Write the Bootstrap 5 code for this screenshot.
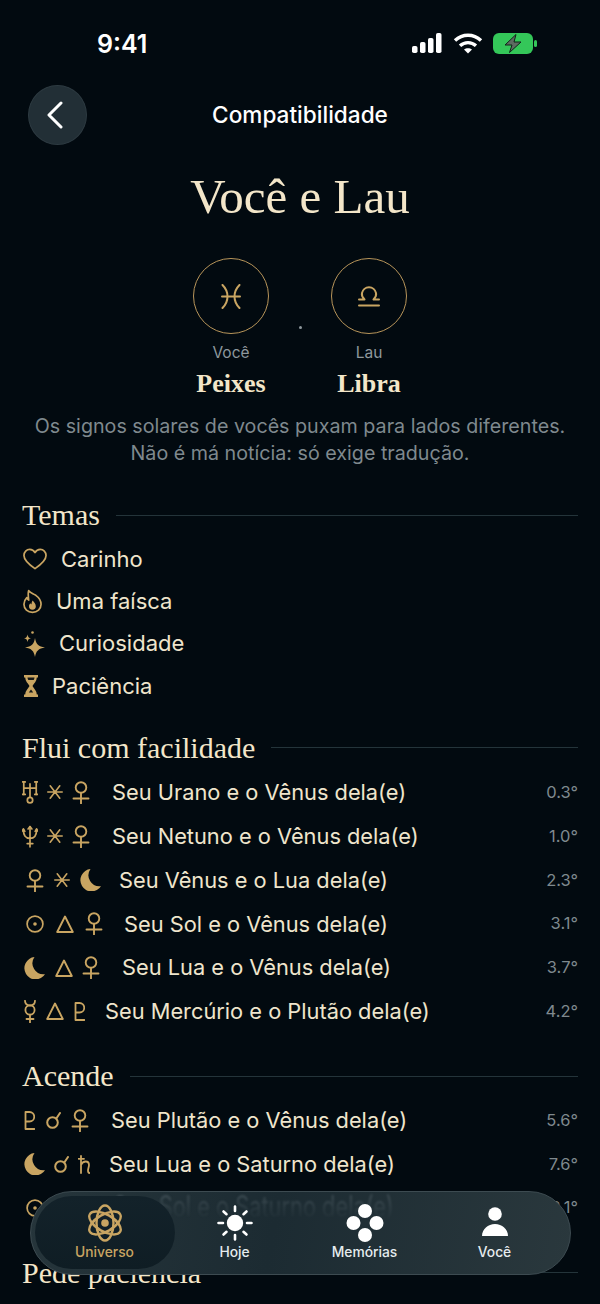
<!DOCTYPE html>
<html lang="pt-BR">
<head>
<meta charset="UTF-8">
<meta name="viewport" content="width=device-width, initial-scale=1.0">
<title>Compatibilidade</title>
<link href="https://cdn.jsdelivr.net/npm/bootstrap@5.3.0/dist/css/bootstrap.min.css" rel="stylesheet">
<style>
html, body { height: 1304px; overflow: hidden; }
body { background: #020a10; color: #efe5cc; font-family: Inter, "Liberation Sans", sans-serif; }
.screen { position: relative; height: 1304px; overflow: hidden; }
.status-row { height: 60px; padding: 26px 62px 0 97px; }
.clock { font-size: 25px; font-weight: 600; line-height: 36px; color: #fff; }
.st-icons { gap: 10px; }
.st-wifi { margin-left: 1px; }
.top-row { height: 60px; margin-top: 25px; padding: 0 28px; position: relative; }
.back-btn { width: 59px; height: 60px; border-radius: 50%; background: #222f36; border: 1px solid #2d3a41; padding-right: 6px; }
.top-title { position: absolute; left: 0; right: 0; top: 0; line-height: 60px; text-align: center; font-size: 22.6px; font-weight: 500; color: #fff; }
.serif { font-family: "Liberation Serif", serif; }
.big-title { font-size: 49px; line-height: 60px; margin: 22px 0 0; text-align: center; color: #f3e6c9; font-weight: 400; }
.signs { margin-top: 31px; gap: 62px; position: relative; }
.sign-col { width: 76px; }
.sign-ring { width: 76px; height: 76px; border-radius: 50%; border: 1.7px solid #b8955a; }
.sign-who { font-size: 15.5px; line-height: 20px; color: #8e989d; margin-top: 9px; }
.sign-name { font-size: 26px; font-weight: 700; line-height: 30px; margin-top: 6px; color: #f3e6c9; white-space: nowrap; }
.sign-dot { position: absolute; left: 298.5px; top: 68px; width: 3px; height: 3px; border-radius: 50%; background: #8e989d; }
.sign-note { margin: 14px 0 0; text-align: center; font-size: 19.7px; line-height: 27px; color: #7f898e; }
.sec-head { padding: 0 22px; gap: 16px; line-height: 36px; font-size: 30px; color: #f3e6c9; }
.sec-line { flex: 1; height: 1px; background: #24343a; }
.sec-temas { margin-top: 30px; }
.sec-flui { margin-top: 22px; }
.sec-more { margin-top: 25px; }
.theme-list { margin-top: 5px; }
.theme-row { height: 42.4px; padding-left: 23px; font-size: 22px; gap: 14px; }
.hour-icon { margin-left: 1px; }
.aspect-list { margin-top: 5px; }
.aspect-tight { margin-top: 4px; }
.aspect { height: 43.8px; padding-right: 22px; font-size: 21.8px; }
.glyph-set { display: flex; justify-content: space-between; align-items: center; flex: none; color: #c9a562; }
.gs-a { margin-left: 22px; width: 68px; margin-right: 22px; }
.gs-b { margin-left: 26px; width: 75px; margin-right: 18px; }
.gs-c { margin-left: 26px; width: 77px; margin-right: 21px; }
.gs-d { margin-left: 23px; width: 77px; margin-right: 22px; }
.gs-e { margin-left: 24px; width: 61px; margin-right: 20px; }
.gs-f { margin-left: 24px; width: 65px; margin-right: 22px; }
.gs-g { margin-left: 23px; width: 67px; margin-right: 19px; }
.orb { margin-left: auto; font-size: 16.5px; color: #7f898e; }
.gold { color: #c9a562; }
.tab-bar { position: absolute; left: 30px; top: 1191px; width: 541px; height: 84px; border-radius: 42px; border: 1.5px solid #3d4b51; background: linear-gradient(100deg, #26353b 0%, #1c2b32 45%, #2a383d 100%); overflow: hidden; padding-left: 8.5px; }
.tab-ghost { position: absolute; left: 82px; top: -6px; font-size: 21.8px; line-height: 30px; color: #5f6d74; transform: scaleY(1.35); transform-origin: left top; opacity: .42; filter: blur(.8px); white-space: nowrap; -webkit-mask-image: linear-gradient(180deg, #000 30%, transparent 85%); mask-image: linear-gradient(180deg, #000 30%, transparent 85%); }
.tab-item { position: relative; width: 130px; height: 81px; font-size: 13.8px; font-weight: 500; color: #e6ecee; padding-top: 12px; }
.tab-item span { position: absolute; left: 0; right: 0; top: 50px; line-height: 20px; text-align: center; }
.tab-item svg { position: relative; }
.tab-on { color: #c9a562; }
.tab-on::before { content: ""; position: absolute; left: -5px; right: -5px; top: 3.5px; bottom: 4px; border-radius: 37px; background: linear-gradient(180deg, #13222a 0%, #0f1d24 100%); }
.tab-on span { z-index: 1; }
</style>
</head>
<body>
<svg width="0" height="0" class="position-absolute">
  <defs>
    <symbol id="s-venus" viewBox="0 0 18 23"><g fill="none" stroke="currentColor" stroke-width="1.9" stroke-linecap="round"><circle cx="9" cy="6.500" r="5.300"/><path d="M9 12v10.500M1.500 17.500h15"/></g></symbol>
    <symbol id="s-sextile" viewBox="0 0 16 16"><g fill="none" stroke="currentColor" stroke-width="1.600" stroke-linecap="round"><path d="M.8 8h14.400M3.200 1.800l9.600 12.400M12.800 1.800 3.200 14.200"/></g></symbol>
    <symbol id="s-uranus" viewBox="0 0 16 24"><g fill="none" stroke="currentColor" stroke-width="1.800" stroke-linecap="round"><path d="M1.500 1v13M14.500 1v13M1.500 7.500h13M8 3v14"/><path d="M0 1h3M13 1h3M0 14h3M13 14h3"/><circle cx="8" cy="20" r="2.800"/></g></symbol>
    <symbol id="s-neptune" viewBox="0 0 17 24"><g fill="none" stroke="currentColor" stroke-width="1.800" stroke-linecap="round" stroke-linejoin="round"><path d="M1.500 4.500c0 6 2 9.500 7 9.500s7-3.500 7-9.500M8.500 1.500V23M5.500 19.500h6"/><path d="M0 6.500l1.500-2.500L3 6.500M14 6.500l1.500-2.500L17 6.500M6.500 4l2-2.500 2 2.500"/></g></symbol>
    <symbol id="s-moon" viewBox="0 0 22 22"><path fill="currentColor" d="M11.500 0A11.200 11.200 0 1 0 22 17.200 11 11 0 0 1 11.500 0z"/></symbol>
    <symbol id="s-sun" viewBox="0 0 18 18"><g fill="none" stroke="currentColor" stroke-width="1.700"><circle cx="9" cy="9" r="7.900"/></g><circle cx="9" cy="9" r="1.800" fill="currentColor"/></symbol>
    <symbol id="s-trine" viewBox="0 0 18 18"><path fill="none" stroke="currentColor" stroke-width="1.900" stroke-linejoin="round" d="M9 1.500 16.800 17H1.200z"/></symbol>
    <symbol id="s-mercury" viewBox="0 0 12 23"><g fill="none" stroke="currentColor" stroke-width="1.800" stroke-linecap="round"><path d="M1 .8c0 3 2 4.700 5 4.700s5-1.700 5-4.700"/><circle cx="6" cy="10" r="4.600"/><path d="M6 14.700V22.500M2.500 19h7"/></g></symbol>
    <symbol id="s-pluto" viewBox="0 0 11 19"><g fill="none" stroke="currentColor" stroke-width="1.800" stroke-linecap="round" stroke-linejoin="round"><path d="M1.500 1v17h9M1.500 1h4a4.500 4.500 0 0 1 0 9.500h-4"/></g></symbol>
    <symbol id="s-conj" viewBox="0 0 15 17"><g fill="none" stroke="currentColor" stroke-width="2" stroke-linecap="round"><circle cx="6.500" cy="10.500" r="5.300"/><path d="M10.300 6.500 14 1"/></g></symbol>
    <symbol id="s-saturn" viewBox="0 0 12 19"><g fill="none" stroke="currentColor" stroke-width="1.800" stroke-linecap="round" stroke-linejoin="round"><path d="M3 1v17M.5 3.800h5.500M3 10c1-2.500 2.700-3.500 4.700-3.500S11 8 11 10c0 2-1 3.500-1 5.500 0 1.500 1 2.500 1.500 2.500"/></g></symbol>
  </defs>
</svg>

<div class="screen">
  <div class="status-row d-flex justify-content-between">
    <div class="clock">9:41</div>
    <div class="st-icons d-flex align-items-center text-white">
      <svg width="30" height="20" viewBox="0 0 30 20" fill="#fff"><rect x="0" y="13" width="5.500" height="7" rx="1.800"/><rect x="8" y="9" width="5.500" height="11" rx="1.800"/><rect x="16" y="5" width="5.500" height="15" rx="1.800"/><rect x="24" y="0" width="5.500" height="20" rx="1.800"/></svg>
      <svg class="st-wifi" width="30" height="21" viewBox="0 0 30 21" fill="none" stroke="#fff" stroke-width="3.400"><path d="M2 7.500c7.500-7 18.500-7 26 0"/><path d="M7 12.800c4.700-4.300 11.300-4.300 16 0"/><path d="M15 20.500l-4-4c2.200-1.800 5.800-1.800 8 0z" fill="#fff" stroke="none"/></svg>
      <svg width="45" height="21" viewBox="0 0 45 21"><rect x="0" y="0" width="40" height="21" rx="6" fill="#34c759"/><rect x="41" y="7" width="3" height="7" rx="1.500" fill="#34c759"/><path d="M23 1.500 12 12h7l-2.500 7.500L28 9h-7z" fill="#5d6b61" stroke="#0f2418" stroke-width="1"/></svg>
    </div>
  </div>

  <div class="top-row">
    <div class="back-btn d-flex align-items-center justify-content-center">
      <svg width="18" height="28" viewBox="0 0 18 28" fill="none" stroke="#fff" stroke-width="3" stroke-linecap="round" stroke-linejoin="round"><path d="M15 2 3 14l12 12"/></svg>
    </div>
    <div class="top-title">Compatibilidade</div>
  </div>

  <h1 class="big-title serif">Você e Lau</h1>

  <div class="signs d-flex justify-content-center">
    <div class="sign-col d-flex flex-column align-items-center">
      <div class="sign-ring d-flex align-items-center justify-content-center gold">
        <svg width="20" height="25" viewBox="0 0 20 25" fill="none" stroke="currentColor" stroke-width="2" stroke-linecap="round"><path d="M1.500 1c3.500 3.500 5 7 5 11.500s-1.500 8-5 11.500M18.500 1c-3.500 3.500-5 7-5 11.500s1.500 8 5 11.500M1 12.500h18"/></svg>
      </div>
      <div class="sign-who">Você</div>
      <div class="sign-name serif">Peixes</div>
    </div>
    <div class="sign-dot"></div>
    <div class="sign-col d-flex flex-column align-items-center">
      <div class="sign-ring d-flex align-items-center justify-content-center gold">
        <svg width="22" height="21" viewBox="0 0 22 21" fill="none" stroke="currentColor" stroke-width="2" stroke-linecap="round" stroke-linejoin="round"><path d="M1 13.500h5.500C4 11 3.500 9 4 7c.7-3 3.500-5.800 7-5.800s6.300 2.800 7 5.800c.5 2 0 4-2.500 6.500H21M1 19.500h20"/></svg>
      </div>
      <div class="sign-who">Lau</div>
      <div class="sign-name serif">Libra</div>
    </div>
  </div>

  <p class="sign-note">Os signos solares de vocês puxam para lados diferentes.<br>Não é má notícia: só exige tradução.</p>

  <div class="sec-head sec-temas serif d-flex align-items-center"><span>Temas</span><div class="sec-line"></div></div>
  <div class="theme-list">
    <div class="theme-row d-flex align-items-center">
      <svg class="gold" width="24" height="22" viewBox="0 0 25 22" fill="none" stroke="currentColor" stroke-width="1.800" stroke-linejoin="round"><path d="M12.500 21C6 16.500 1 12.500 1 7.300 1 3.500 3.800 1 7 1c2.300 0 4.300 1.200 5.500 3.300C13.700 2.200 15.700 1 18 1c3.200 0 6 2.500 6 6.300 0 5.200-5 9.200-11.500 13.700z"/></svg>
      <span>Carinho</span>
    </div>
    <div class="theme-row d-flex align-items-center">
      <svg class="gold" width="19" height="25" viewBox="0 0 20 25" fill="none" stroke="currentColor" stroke-width="1.800" stroke-linejoin="round"><path d="M6 1c1.500 2.500 4.500 3 7.500 5 3.500 2.500 5.500 6 5.500 9.500 0 5-4 8.500-9 8.500s-9-3.500-9-8.500c0-3 1.500-5.500 3-7 .5 1.200 1 2 2 2.500C5.500 7.500 5 4 6 1z"/><path fill="currentColor" stroke="none" d="M10.300 11.500c.5 1.500 3.200 3 3.200 6a3.600 3.600 0 0 1-7.200 0c0-1.500.8-2.500 1.500-3.200.3.700.6 1 1.200 1.200 0-1.500.3-3 1.300-4z"/></svg>
      <span>Uma faísca</span>
    </div>
    <div class="theme-row d-flex align-items-center">
      <svg class="gold" width="22" height="26" viewBox="0 0 22 26" fill="currentColor"><path d="M12 7c1 6 3.500 8.500 10 9.500-6.500 1-9 3.500-10 9.500-1-6-3.500-8.500-10-9.500C8.500 15.500 11 13 12 7z"/><path d="M4.500 3.500c.4 2.500 1.300 3.400 3.500 3.800-2.200.4-3.100 1.300-3.500 3.700C4.100 8.600 3.200 7.700 1 7.300c2.200-.4 3.100-1.300 3.500-3.800z"/><circle cx="9.500" cy="1.500" r="1.300"/></svg>
      <span>Curiosidade</span>
    </div>
    <div class="theme-row d-flex align-items-center">
      <svg class="gold hour-icon" width="14" height="22" viewBox="0 0 14 22" fill="currentColor"><path d="M0 0h14v2.500h-1.200c0 3.500-2.800 6-4.300 8.500 1.500 2.500 4.300 5 4.300 8.500H14V22H0v-2.500h1.200c0-3.500 2.800-6 4.300-8.500-1.500-2.500-4.300-5-4.300-8.500H0z"/><path fill="#020a10" d="M3.500 2.500h7c0 1-.3 1.700-.8 2.500H4.300c-.5-.8-.8-1.500-.8-2.500zM7 14.500c.6.900 1.600 2 2.200 3H4.800c.6-1 1.600-2.100 2.200-3z" opacity=".9"/></svg>
      <span>Paciência</span>
    </div>
  </div>

  <div class="sec-head sec-flui serif d-flex align-items-center"><span>Flui com facilidade</span><div class="sec-line"></div></div>
  <div class="aspect-list">
    <div class="aspect d-flex align-items-center"><div class="glyph-set gs-a"><svg width="16" height="23"><use href="#s-uranus"/></svg><svg width="16" height="16"><use href="#s-sextile"/></svg><svg width="18" height="23"><use href="#s-venus"/></svg></div><span>Seu Urano e o Vênus dela(e)</span><span class="orb">0.3°</span></div>
    <div class="aspect d-flex align-items-center"><div class="glyph-set gs-a"><svg width="16" height="23"><use href="#s-neptune"/></svg><svg width="16" height="16"><use href="#s-sextile"/></svg><svg width="18" height="23"><use href="#s-venus"/></svg></div><span>Seu Netuno e o Vênus dela(e)</span><span class="orb">1.0°</span></div>
    <div class="aspect d-flex align-items-center"><div class="glyph-set gs-b"><svg width="18" height="23"><use href="#s-venus"/></svg><svg width="16" height="16"><use href="#s-sextile"/></svg><svg width="22" height="22"><use href="#s-moon"/></svg></div><span>Seu Vênus e o Lua dela(e)</span><span class="orb">2.3°</span></div>
    <div class="aspect d-flex align-items-center"><div class="glyph-set gs-c"><svg width="18" height="18"><use href="#s-sun"/></svg><svg width="18" height="18"><use href="#s-trine"/></svg><svg width="18" height="23"><use href="#s-venus"/></svg></div><span>Seu Sol e o Vênus dela(e)</span><span class="orb">3.1°</span></div>
    <div class="aspect d-flex align-items-center"><div class="glyph-set gs-d"><svg width="22" height="22"><use href="#s-moon"/></svg><svg width="18" height="18"><use href="#s-trine"/></svg><svg width="18" height="23"><use href="#s-venus"/></svg></div><span>Seu Lua e o Vênus dela(e)</span><span class="orb">3.7°</span></div>
    <div class="aspect d-flex align-items-center"><div class="glyph-set gs-e"><svg width="12" height="23"><use href="#s-mercury"/></svg><svg width="18" height="18"><use href="#s-trine"/></svg><svg width="11" height="19"><use href="#s-pluto"/></svg></div><span>Seu Mercúrio e o Plutão dela(e)</span><span class="orb">4.2°</span></div>
  </div>

  <div class="sec-head sec-more serif d-flex align-items-center"><span>Acende</span><div class="sec-line"></div></div>
  <div class="aspect-tight">
    <div class="aspect d-flex align-items-center"><div class="glyph-set gs-f"><svg width="11" height="19"><use href="#s-pluto"/></svg><svg width="15" height="17"><use href="#s-conj"/></svg><svg width="18" height="23"><use href="#s-venus"/></svg></div><span>Seu Plutão e o Vênus dela(e)</span><span class="orb">5.6°</span></div>
    <div class="aspect d-flex align-items-center"><div class="glyph-set gs-g"><svg width="22" height="22"><use href="#s-moon"/></svg><svg width="15" height="17"><use href="#s-conj"/></svg><svg width="12" height="19"><use href="#s-saturn"/></svg></div><span>Seu Lua e o Saturno dela(e)</span><span class="orb">7.6°</span></div>
    <div class="aspect d-flex align-items-center"><div class="glyph-set gs-c"><svg width="18" height="18"><use href="#s-sun"/></svg><svg width="15" height="17"><use href="#s-conj"/></svg><svg width="12" height="19"><use href="#s-saturn"/></svg></div><span>Seu Sol e o Saturno dela(e)</span><span class="orb">8.1°</span></div>
  </div>

  <div class="sec-head sec-more serif d-flex align-items-center"><span>Pede paciência</span><div class="sec-line"></div></div>

  <nav class="tab-bar d-flex">
    <div class="tab-ghost" aria-hidden="true">Seu Sol e o Saturno dela(e)</div>
    <div class="tab-item tab-on d-flex justify-content-center">
      <svg width="36" height="38" viewBox="0 0 36 38" fill="none" stroke="currentColor" stroke-width="2.400"><ellipse cx="18" cy="19" rx="8.500" ry="17.500"/><ellipse cx="18" cy="19" rx="8.500" ry="17.500" transform="rotate(60 18 19)"/><ellipse cx="18" cy="19" rx="8.500" ry="17.500" transform="rotate(120 18 19)"/><circle cx="18" cy="19" r="3.800" fill="currentColor" stroke="none"/></svg>
      <span>Universo</span>
    </div>
    <div class="tab-item d-flex justify-content-center">
      <svg width="36" height="38" viewBox="0 0 36 38" fill="#fff"><circle cx="18" cy="19" r="8.200"/><g stroke="#fff" stroke-width="2.600" stroke-linecap="round"><path d="M18 2.500v4.500M18 31v4.500M1.500 19H6M30 19h4.500M6.500 7.500l3 2.700M26.500 27.800l3 2.700M29.500 7.500l-3 2.700M9.500 27.800l-3 2.700"/></g></svg>
      <span>Hoje</span>
    </div>
    <div class="tab-item d-flex justify-content-center">
      <svg width="38" height="38" viewBox="0 0 38 38" fill="#fff"><circle cx="19" cy="7" r="7"/><circle cx="7.500" cy="19" r="7"/><circle cx="30.500" cy="19" r="7"/><circle cx="19" cy="31" r="7"/></svg>
      <span>Memórias</span>
    </div>
    <div class="tab-item d-flex justify-content-center">
      <svg width="28" height="38" viewBox="0 0 28 38" fill="#fff"><circle cx="14" cy="10" r="6.800"/><path d="M1 32c0-7 6-12 13-12s13 5 13 12z"/></svg>
      <span>Você</span>
    </div>
  </nav>
</div>

<script src="https://cdn.jsdelivr.net/npm/bootstrap@5.3.0/dist/js/bootstrap.bundle.min.js"></script>
</body>
</html>
